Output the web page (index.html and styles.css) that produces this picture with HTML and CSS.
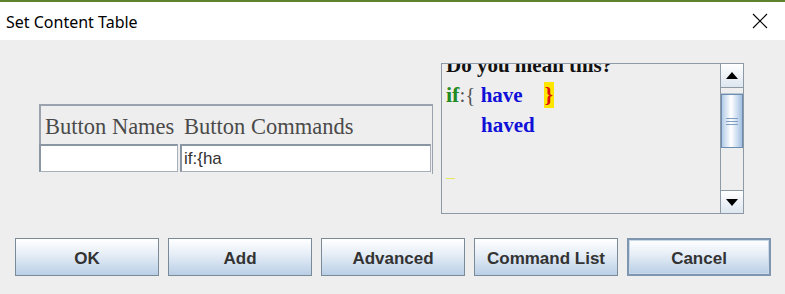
FILE: index.html
```html
<!DOCTYPE html>
<html>
<head>
<meta charset="utf-8">
<link rel="stylesheet" href="styles.css">
</head>
<body>
<div class="window">
  <div class="titlebar">
    <span class="title">Set Content Table</span>
    <svg class="close" width="16" height="16" viewBox="0 0 16 16"><path d="M1 1 L15 15 M15 1 L1 15" stroke="#000" stroke-width="1.1" fill="none"/></svg>
  </div>
  <div class="content">
    <div class="top">
      <div class="table">
        <div class="thead">
          <div class="th th1">Button Names</div>
          <div class="th th2">Button Commands</div>
        </div>
        <div class="trow">
          <div class="cell c1"></div>
          <div class="cell c2">if:{ha</div>
        </div>
      </div>
      <div class="suggest">
        <div class="text">
          <div class="inner">
            <div class="line q">Do you mean this?</div>
            <div class="line"><span class="kw">if</span><span class="punc">:{</span> <span class="word">have</span><span class="brace">}</span></div>
            <div class="line indent"><span class="word">haved</span></div>
            <div class="caret"></div>
          </div>
        </div>
        <div class="scrollbar">
          <div class="sbtn up"><svg width="12" height="7" viewBox="0 0 12 7"><path d="M0 7 L6 0 L12 7 Z" fill="#000"/></svg></div>
          <div class="track">
            <div class="gap"></div>
            <div class="thumb"><span></span><span></span><span></span></div>
          </div>
          <div class="sbtn down"><svg width="12" height="7" viewBox="0 0 12 7"><path d="M0 0 L6 7 L12 0 Z" fill="#000"/></svg></div>
        </div>
      </div>
    </div>
    <div class="buttons">
      <div class="btn">OK</div>
      <div class="btn">Add</div>
      <div class="btn">Advanced</div>
      <div class="btn">Command List</div>
      <div class="btn focus">Cancel</div>
    </div>
  </div>
</div>
</body>
</html>
```
FILE: styles.css
```css
html, body { margin: 0; padding: 0; }
body { width: 785px; height: 294px; overflow: hidden; background: #eeeeee; }
.window { width: 785px; height: 294px; display: flex; flex-direction: column; }
.titlebar {
  height: 38px;
  border-top: 2px solid #5f822c;
  background: #ffffff;
  display: flex;
  align-items: center;
  justify-content: space-between;
  padding: 0 17px 0 6px;
}
.title { font-family: "Noto Sans", "Open Sans", sans-serif; font-size: 16px; color: #000; margin-top: 1px; }
.close { display: block; margin-top: 0; }
.content { flex: 1; background: #eeeeee; display: flex; flex-direction: column; }
.top { display: flex; padding-left: 39px; height: 174px; }
.table { margin-top: 64px; width: 394px; height: 70px; display: flex; flex-direction: column; border-right: 1px solid #9aa3ad; box-sizing: border-box; }
.thead { display: flex; height: 40px; border-top: 2px solid #9aa3ad; border-left: 2px solid #9aa3ad; box-sizing: border-box; font-family: "Liberation Serif", serif; font-size: 22.5px; color: #4a4a4a; }
.th { padding-top: 8px; }
.th1 { width: 138px; padding-left: 4px; box-sizing: border-box; }
.th2 { padding-left: 5px; }
.trow { display: flex; gap: 2px; height: 28px; padding-right: 1px; }
.cell { background: #fff; border-top: 2px solid #8b96a3; border-left: 2px solid #8b96a3; border-right: 1px solid #a7b0ba; border-bottom: 1px solid #a7b0ba; box-sizing: border-box; height: 28px; }
.c1 { width: 139px; }
.c2 { flex: 1; font-family: "Liberation Sans", Arial, sans-serif; font-size: 17px; color: #333; padding-left: 2px; line-height: 25px; }
.suggest { margin-top: 23px; margin-left: 8px; width: 303px; height: 151px; border: 1px solid #8e99a6; box-sizing: border-box; display: flex; background: #eeeeee; }
.text { flex: 1; overflow: hidden; border-right: 1px solid #8e99a6; }
.inner { margin-top: -14px; padding-left: 4px; font-family: "Liberation Serif", serif; font-size: 21px; font-weight: bold; }
.line { height: 30px; line-height: 30px; white-space: pre; }
.q { color: #111; }
.kw { color: #228b22; font-size: 22px; }
.punc { color: #555; font-weight: normal; }
.word { color: #1010d8; }
.brace { color: #e01010; background: #ffe600; margin-left: 21px; padding: 0 1px; display: inline-block; line-height: 26px; }
.indent { padding-left: 35px; }
.caret { width: 9px; height: 1px; background: #e8e860; margin-top: 38px; }
.scrollbar { width: 22px; display: flex; flex-direction: column; background: #eeeeee; }
.sbtn { height: 24px; display: flex; align-items: center; justify-content: center; background: linear-gradient(#ffffff, #dde6ef); box-sizing: border-box; }
.up { border-bottom: 1px solid #8e99a6; }
.down { border-top: 1px solid #8e99a6; height: 23px; }
.track { flex: 1; display: flex; flex-direction: column; }
.gap { height: 5px; border-bottom: 1px solid #b8c6d4; }
.thumb { height: 54px; box-sizing: border-box; border: 1px solid #6d8db0; background: linear-gradient(90deg, #b3cce8, #ffffff 45%, #c5d8ee 80%, #a3bfdf); display: flex; flex-direction: column; align-items: center; justify-content: center; gap: 2px; }
.thumb span { display: block; width: 12px; height: 1px; background: #7f9cc1; }
.buttons { display: flex; gap: 9px; padding-left: 15px; margin-top: 24px; }
.btn { width: 144px; height: 38px; box-sizing: border-box; border: 1px solid #7a8a99; background: linear-gradient(#ffffff, #e8eff7 40%, #b9cfe6); font-family: "Liberation Sans", Arial, sans-serif; font-weight: bold; font-size: 17px; color: #333; display: flex; align-items: center; justify-content: center; padding-top: 3px; }
.btn.focus { border: 2px solid #7e96b0; box-shadow: inset 0 0 0 1px #c9d9ea; }
```
